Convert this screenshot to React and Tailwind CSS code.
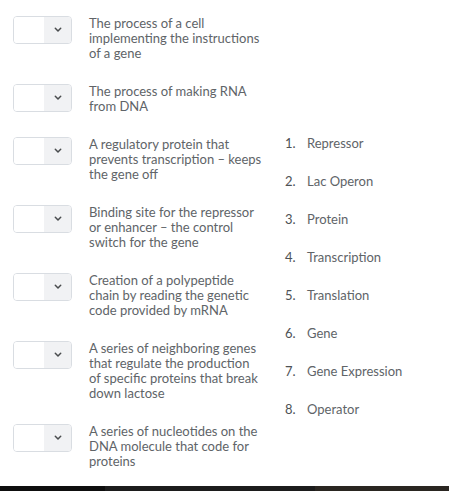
import React from "react";

const rows = [
  ["The process of a cell", "implementing the instructions", "of a gene"],
  ["The process of making RNA", "from DNA"],
  ["A regulatory protein that", "prevents transcription – keeps", "the gene off"],
  ["Binding site for the repressor", "or enhancer – the control", "switch for the gene"],
  ["Creation of a polypeptide", "chain by reading the genetic", "code provided by mRNA"],
  ["A series of neighboring genes", "that regulate the production", "of specific proteins that break", "down lactose"],
  ["A series of nucleotides on the", "DNA molecule that code for", "proteins"],
];

const answers = [
  "Repressor",
  "Lac Operon",
  "Protein",
  "Transcription",
  "Translation",
  "Gene",
  "Gene Expression",
  "Operator",
];

function Select() {
  return (
    <div className="flex h-[28px] w-[59px] shrink-0 overflow-hidden rounded-[4px] border border-[#d9dde2] bg-white">
      <div className="flex-1 bg-white" />
      <div className="flex w-[27px] items-center justify-center bg-[#f1f2f4]">
        <svg width="8" height="6" viewBox="0 0 8 6" fill="none">
          <path d="M1.3 1.3 L4 4 L6.7 1.3" stroke="#494c4e" strokeWidth="1.5" strokeLinecap="round" strokeLinejoin="round" />
        </svg>
      </div>
    </div>
  );
}

export default function App() {
  return (
    <div
      className="flex h-[491px] w-[449px] flex-col overflow-hidden bg-white text-[13px] leading-[15px] text-[#606468]"
      style={{ fontFamily: "Lato, 'Open Sans', sans-serif" }}
    >
      <div className="flex flex-1">
        <div className="flex w-[270px] flex-col gap-[23px] pl-[13px] pt-[16px]">
          {rows.map((lines, i) => (
            <div key={i} className="flex items-start gap-[17px]">
              <Select />
              <div className="flex flex-col">
                {lines.map((l, j) => (
                  <span key={j} className="whitespace-nowrap">{l}</span>
                ))}
              </div>
            </div>
          ))}
        </div>
        <ol className="flex flex-col gap-[23px] pl-[15px] pt-[136px]">
          {answers.map((a, i) => (
            <li key={i} className="flex">
              <span className="w-[22px] text-[#4e5255]">{i + 1}.</span>
              <span>{a}</span>
            </li>
          ))}
        </ol>
      </div>
      <div className="flex h-[5px] shrink-0">
        <div className="h-full w-[105px] bg-[#0e0e0e]" />
        <div className="h-full w-[210px] bg-[#1c1c1c]" />
        <div className="h-full flex-1 bg-[#2a2621]" />
      </div>
    </div>
  );
}
